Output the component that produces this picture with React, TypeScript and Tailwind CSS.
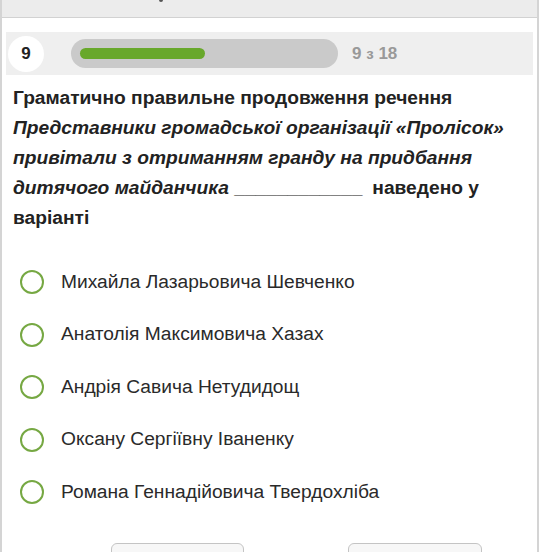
const options = [
  "Михайла Лазарьовича Шевченко",
  "Анатолія Максимовича Хазах",
  "Андрія Савича Нетудидощ",
  "Оксану Сергіївну Іваненку",
  "Романа Геннадійовича Твердохліба",
];

export default function App() {
  return (
    <div
      className="h-[552px] w-[539px] overflow-hidden bg-white text-[#222]"
      style={{ fontFamily: '"Liberation Sans", Arial, sans-serif' }}
    >
      <div className="h-full border-l-2 border-r-2 border-[#d4d4d4]">
        {/* top bar */}
        <div className="relative h-[18px] border-b border-[#d2d2d2] bg-[#ececec]">
          <span className="absolute left-[157px] top-[-2px] h-[4px] w-[4px] rounded-full bg-[#555]" />
        </div>

        {/* progress row */}
        <div className="mx-[4px] mt-[14px] flex h-[43px] items-center bg-[#efefef] pl-[2px]">
          <div className="flex h-[36px] w-[36px] items-center justify-center rounded-full bg-white text-[17px] font-bold text-[#222]">
            9
          </div>
          <div className="ml-[27px] flex h-[29px] w-[267px] items-center rounded-full bg-[#cacaca] px-[9px]">
            <div className="h-[11px] w-[125px] rounded-full bg-[#68a82b]" />
          </div>
          <div className="ml-[14px] text-[17px] font-bold text-[#999]">
            9 <span className="text-[15px]">з</span> 18
          </div>
        </div>

        {/* question */}
        <div className="px-[11px] pt-[8px] text-[19.2px] font-bold leading-[30px] text-[#222]">
          Граматично правильне продовження речення{" "}
          <i>
            Представники громадської організації «Пролісок» привітали з
            отриманням гранду на придбання дитячого майданчика
          </i>{" "}
          <span>____________</span>
          <span className="ml-[10px]">наведено у варіанті</span>
        </div>

        {/* options */}
        <div className="mt-[23px] flex flex-col">
          {options.map((o) => (
            <div key={o} className="flex h-[52.5px] items-center pl-[18px]">
              <span className="h-[24px] w-[24px] rounded-full border-[2.5px] border-[#76a843]" />
              <span className="ml-[17px] text-[19.2px] text-[#2a2a2a]">{o}</span>
            </div>
          ))}
        </div>

        {/* buttons */}
        <div className="mt-[24px] flex">
          <div className="ml-[109px] h-[30px] w-[133px] rounded-[6px] border border-[#c4c4c4] bg-[#f7f7f7]" />
          <div className="ml-[104px] h-[30px] w-[134px] rounded-[6px] border border-[#c4c4c4] bg-[#f7f7f7]" />
        </div>
      </div>
    </div>
  );
}
